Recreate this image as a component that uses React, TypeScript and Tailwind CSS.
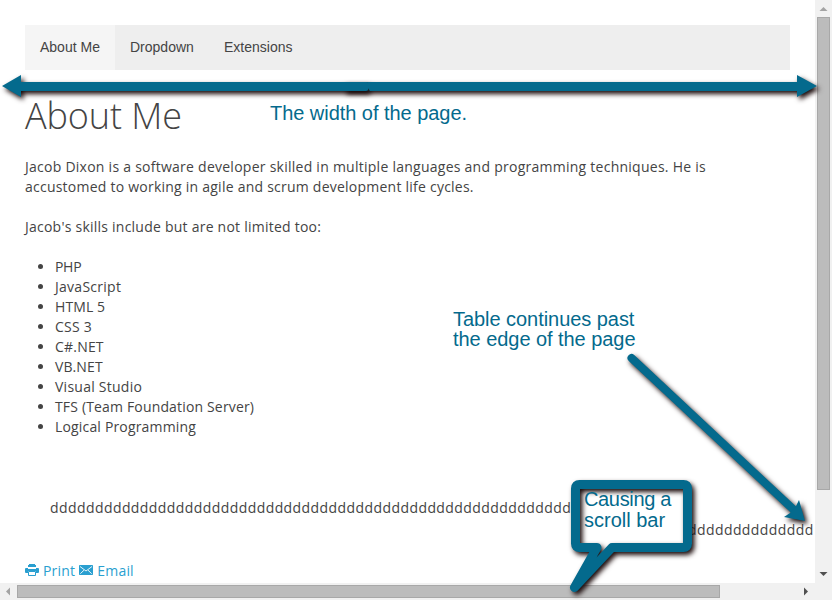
import React from 'react';

const skills = [
  { name: 'PHP', spacing: 'tracking-[-0.3px]' },
  { name: 'JavaScript', spacing: 'tracking-[0.27px]' },
  { name: 'HTML 5', spacing: 'tracking-[0.1px]' },
  { name: 'CSS 3', spacing: 'tracking-[0.25px]' },
  { name: 'C#.NET', spacing: 'tracking-[0.2px]' },
  { name: 'VB.NET', spacing: 'tracking-[0.1px]' },
  { name: 'Visual Studio', spacing: 'tracking-[0.25px]' },
  { name: 'TFS (Team Foundation Server)', spacing: 'tracking-[0.16px]' },
  { name: 'Logical Programming', spacing: 'tracking-[0.17px]' },
];

function Navigation() {
  return (
    <nav className="flex h-[45px] w-[765px] shrink-0 bg-[#eeeeee] font-['Liberation_Sans',Arial,sans-serif] text-sm leading-[45px] text-[#444444]">
      <a className="w-[90px] bg-[#f5f5f5] pl-[15px]">About Me</a>
      <a className="w-[94px] pl-[15px]">Dropdown</a>
      <a className="pl-[15px]">Extensions</a>
    </nav>
  );
}

function PrintIcon() {
  return (
    <svg className="h-3 w-3.5 -translate-y-px" viewBox="0 0 14 12">
      <path d="M3 1h1V0h6v1h1v2H3z" fill="#2a9fd0" />
      <path d="M1 4h2v1h8V4h2q1 0 1 1v3q0 1-1 1h-2V7H3v2H1Q0 9 0 8V5q0-1 1-1z" fill="#2a9fd0" />
      <path d="M3.500 7.500h7v4h-7z" fill="#fff" stroke="#2a9fd0" strokeWidth="1" />
    </svg>
  );
}

function MailIcon() {
  return (
    <svg className="h-2.5 w-3.5 -translate-y-px" viewBox="0 0 14 10">
      <rect width="14" height="10" rx="0.7" fill="#2a9fd0" />
      <path d="M1 1.500 7 6l6-4.500M1.300 8.700 5 5.200M12.700 8.700 9 5.200" fill="none" stroke="#fff" strokeWidth="0.9" />
    </svg>
  );
}

function Annotations() {
  return (
    <>
      <svg className="pointer-events-none absolute inset-0 h-[600px] w-[832px]" viewBox="0 0 832 600">
        <defs>
          <filter id="shadow" filterUnits="userSpaceOnUse" x="0" y="0" width="832" height="600" colorInterpolationFilters="sRGB">
            <feDropShadow dx="2.500" dy="3" stdDeviation="2.800" floodColor="#1a0a0a" floodOpacity="1" />
          </filter>
        </defs>
        <g filter="url(#shadow)" fill="#046a8d">
          <path d="M344 82H797V75L817 86 797 97V91H344z" />
        </g>
        <g filter="url(#shadow)" fill="#046a8d">
          <path d="M2 86 21 75V82H366q2.500 0 2.500 2v4q0 3-2.500 3H21V97z" />
        </g>
        <path d="M368 82H797V91H370L368 88z" fill="#046a8d" />
        <g filter="url(#shadow)" fill="#046a8d">
          <path d="M631.500 358 794 510" stroke="#046a8d" strokeWidth="8" strokeLinecap="round" />
          <path d="M805 521 799 500 795.500 507 790 513 784 517z" />
        </g>
        <path d="M575.500 484.500H687.500V547.500H575.500z" fill="#fff" />
        <path
          d="M579.500 484.500H683.500Q687.500 484.500 687.500 488.500V543.500Q687.500 547.500 683.500 547.500H612L574.500 587.500 597 547.500H579.500Q575.500 547.500 575.500 543.500V488.500Q575.500 484.500 579.500 484.500z"
          fill="none"
          stroke="#046a8d"
          strokeWidth="9"
          strokeLinejoin="round"
          filter="url(#shadow)"
        />
      </svg>
      <div className="absolute left-[270px] top-[103px] whitespace-nowrap font-['Liberation_Sans',Arial,sans-serif] text-[20px] leading-[21px] tracking-[-0.04px] text-[#046a8d]">
        The width of the page.
      </div>
      <div className="absolute left-[453px] top-[309px] whitespace-nowrap font-['Liberation_Sans',Arial,sans-serif] text-[20px] leading-[20px] tracking-[-0.05px] text-[#046a8d]">
        <div>Table continues past</div>
        <div>the edge of the page</div>
      </div>
      <div className="absolute left-[584px] top-[489px] whitespace-nowrap font-['Liberation_Sans',Arial,sans-serif] text-[20px] leading-[21px] text-[#046a8d]">
        <div className="tracking-[-0.35px]">Causing a</div>
        <div>scroll bar</div>
      </div>
    </>
  );
}

function VerticalScrollbar() {
  return (
    <div className="flex w-[17px] flex-col items-center bg-[#f1f1f1]">
      <svg className="h-[17px] w-[17px] shrink-0" viewBox="0 0 17 17">
        <path d="M4.500 11 8.500 7l4 4z" fill="#a3a3a3" />
      </svg>
      <div className="h-[473px] w-[13px] shrink-0 border border-[#a8a8a8] bg-[#bcbcbc]" />
      <svg className="mt-auto h-[17px] w-[17px] shrink-0" viewBox="0 0 17 17">
        <path d="M4.500 6 8.500 10l4-4z" fill="#505050" />
      </svg>
    </div>
  );
}

function HorizontalScrollbar() {
  return (
    <div className="flex h-[17px] shrink-0 items-center bg-[#f1f1f1]">
      <svg className="h-[17px] w-[17px] shrink-0" viewBox="0 0 17 17">
        <path d="M10 4.500 6 8.500l4 4z" fill="#a3a3a3" />
      </svg>
      <div className="h-[13px] w-[703px] border border-[#a8a8a8] bg-[#bcbcbc]" />
      <svg className="ml-auto mr-[18px] h-[17px] w-[17px] shrink-0" viewBox="0 0 17 17">
        <path d="M7 4.500 11 8.500l-4 4z" fill="#505050" />
      </svg>
    </div>
  );
}

export default function App() {
  return (
    <div className="relative flex h-[600px] w-[832px] flex-col overflow-hidden bg-white font-['Open_Sans',sans-serif] text-sm leading-5 text-[#444444]">
      <div className="flex h-[583px] shrink-0">
        <main className="flex w-[815px] flex-col overflow-hidden whitespace-nowrap pl-[25px] pt-[25px]">
          <Navigation />
          <h1 className="mt-[25px] text-[36px] font-light leading-[42px] tracking-[-0.1px]">About Me</h1>
          <p className="mt-5">
            <span className="tracking-[0.255px]">Jacob Dixon is a software developer skilled in multiple languages and programming techniques. He is</span>
            <br />
            <span className="tracking-[0.235px]">accustomed to working in agile and scrum development life cycles.</span>
          </p>
          <p className="mt-5 tracking-[0.235px]">Jacob's skills include but are not limited too:</p>
          <ul className="mt-5 list-disc pl-[30px]">
            {skills.map((skill) => (
              <li key={skill.name}><span className={skill.spacing}>{skill.name}</span></li>
            ))}
          </ul>
          <div className="mt-[61px] flex h-[42px]">
            <span className="w-[636px] shrink-0 pl-[25px] tracking-[0.420px]">{'d'.repeat(58)}</span>
            <span className="pt-[22px] tracking-[0.420px]">{'d'.repeat(17)}</span>
          </div>
          <div className="mt-[21px] flex items-center text-[#2a9fd0]">
            <PrintIcon />
            <span className="ml-1 tracking-[0.2px]">Print</span>
            <span className="ml-1 mr-1"><MailIcon /></span>
            <span className="tracking-[0.2px]">Email</span>
          </div>
        </main>
        <VerticalScrollbar />
      </div>
      <HorizontalScrollbar />
      <Annotations />
    </div>
  );
}
